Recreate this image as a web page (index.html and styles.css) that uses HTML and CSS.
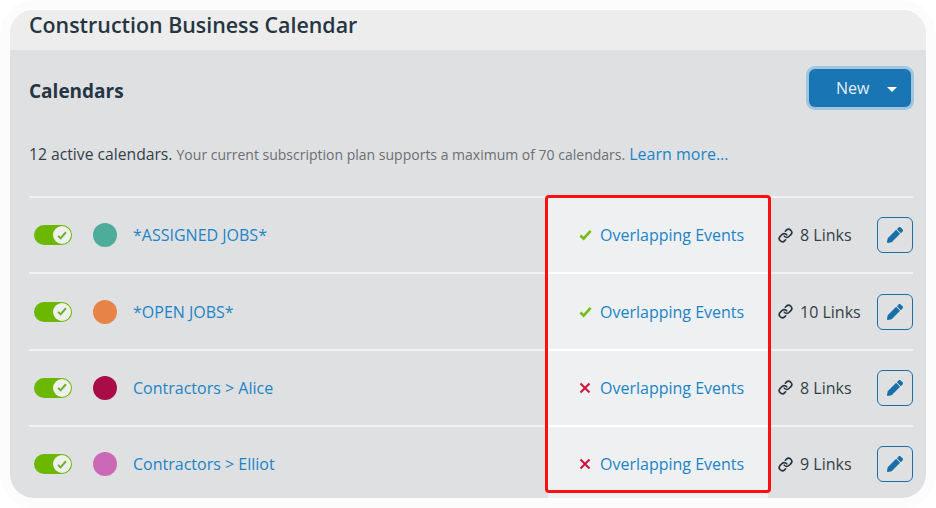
FILE: index.html
```html
<!DOCTYPE html>
<html lang="en">
<head>
<meta charset="utf-8">
<title>Construction Business Calendar</title>
<link rel="stylesheet" href="styles.css">
</head>
<body>
<svg class="defs" aria-hidden="true">
  <symbol id="link" viewBox="0 0 24 24"><path d="M10 13a5 5 0 0 0 7.54.54l3-3a5 5 0 0 0-7.07-7.07l-1.72 1.71"/><path d="M14 11a5 5 0 0 0-7.54-.54l-3 3a5 5 0 0 0 7.07 7.07l1.71-1.71"/></symbol>
  <symbol id="pencil" viewBox="0 0 512 512"><path d="M497.9 142.1l-46.1 46.1c-4.7 4.7-12.3 4.7-17 0l-111-111c-4.7-4.7-4.7-12.3 0-17l46.1-46.1c18.7-18.7 49.1-18.7 67.9 0l60.1 60.1c18.8 18.7 18.8 49.1 0 67.9zM284.2 99.8L21.6 362.4.4 483.9c-2.9 16.4 11.4 30.6 27.8 27.8l121.5-21.3 262.6-262.6c4.7-4.7 4.7-12.3 0-17l-111-111c-4.8-4.7-12.4-4.7-17.1 0z"/></symbol>
  <symbol id="tick" viewBox="0 0 14 12"><path d="M1.5 6.5 5 10l7.5-8.5" fill="none" stroke="currentColor" stroke-width="2.8"/></symbol>
  <symbol id="cross" viewBox="0 0 12 12"><path d="M1.5 1.5l9 9M10.5 1.5l-9 9" fill="none" stroke="currentColor" stroke-width="2.1"/></symbol>
</svg>
<main class="card">
  <header class="top"><h1 class="title">Construction Business Calendar</h1></header>
  <section class="body">
    <div class="head">
      <h2 class="heading">Calendars</h2>
      <button class="new" type="button">New<span class="caret"></span></button>
    </div>
    <p class="summary">12 active calendars. <small class="note">Your current subscription plan supports a maximum of 70 calendars.</small> <a class="link more" href="#">Learn more...</a></p>
    <div class="list">
      <div class="row">
        <span class="toggle"><span class="knob"><svg class="knob-tick"><use href="#tick"/></svg></span></span>
        <span class="dot teal"></span>
        <a class="link name" href="#">*ASSIGNED JOBS*</a>
        <span class="status"><svg class="mark ok"><use href="#tick"/></svg><a class="link" href="#">Overlapping Events</a></span>
        <span class="links"><svg class="chain"><use href="#link"/></svg>8 Links</span>
        <button class="edit" type="button" aria-label="Edit"><svg class="pencil"><use href="#pencil"/></svg></button>
      </div>
      <div class="row">
        <span class="toggle"><span class="knob"><svg class="knob-tick"><use href="#tick"/></svg></span></span>
        <span class="dot orange"></span>
        <a class="link name" href="#">*OPEN JOBS*</a>
        <span class="status"><svg class="mark ok"><use href="#tick"/></svg><a class="link" href="#">Overlapping Events</a></span>
        <span class="links"><svg class="chain"><use href="#link"/></svg>10 Links</span>
        <button class="edit" type="button" aria-label="Edit"><svg class="pencil"><use href="#pencil"/></svg></button>
      </div>
      <div class="row">
        <span class="toggle"><span class="knob"><svg class="knob-tick"><use href="#tick"/></svg></span></span>
        <span class="dot crimson"></span>
        <a class="link name" href="#">Contractors &gt; Alice</a>
        <span class="status"><svg class="mark bad"><use href="#cross"/></svg><a class="link" href="#">Overlapping Events</a></span>
        <span class="links"><svg class="chain"><use href="#link"/></svg>8 Links</span>
        <button class="edit" type="button" aria-label="Edit"><svg class="pencil"><use href="#pencil"/></svg></button>
      </div>
      <div class="row">
        <span class="toggle"><span class="knob"><svg class="knob-tick"><use href="#tick"/></svg></span></span>
        <span class="dot pink"></span>
        <a class="link name" href="#">Contractors &gt; Elliot</a>
        <span class="status"><svg class="mark bad"><use href="#cross"/></svg><a class="link" href="#">Overlapping Events</a></span>
        <span class="links"><svg class="chain"><use href="#link"/></svg>9 Links</span>
        <button class="edit" type="button" aria-label="Edit"><svg class="pencil"><use href="#pencil"/></svg></button>
      </div>
      <div class="callout"></div>
    </div>
  </section>
</main>
</body>
</html>
```

FILE: styles.css
```css
* { box-sizing: border-box; }
html, body { height: 100%; }
body {
  margin: 0;
  padding: 10px;
  background: #fff;
  font-family: "Open Sans", "Noto Sans", sans-serif;
  color: #333f48;
  overflow: hidden;
}
.defs { display: none; }
.card {
  height: 488px;
  border-radius: 24px;
  overflow: hidden;
  background: #dfe0e2;
  box-shadow: 0 0 0 10px #fcfcfc;
}
.top {
  height: 40px;
  background: #ededed;
  padding-left: 19px;
}
.title {
  margin: 0;
  font-size: 21.4px;
  line-height: 30px;
  font-weight: 550;
  color: #253642;
}
.body { padding: 0 13px 0 19px; }
.head {
  display: flex;
  justify-content: space-between;
  align-items: center;
  height: 38px;
  margin-top: 19px;
  padding-right: 2px;
}
.heading {
  margin: 0;
  padding-top: 6px;
  font-size: 19px;
  line-height: 24px;
  font-weight: 700;
  color: #253642;
}
.new {
  display: flex;
  align-items: center;
  width: 102px;
  height: 38px;
  padding: 0 0 0 27px;
  border: 0;
  border-radius: 6px;
  background: #1a75b4;
  box-shadow: 0 0 0 3px #9fc6de;
  color: #e4eff6;
  font: 400 16px/22px "Open Sans", sans-serif;
}
.caret {
  margin-left: 18px;
  margin-top: 2px;
  border-top: 5px solid #fff;
  border-left: 5px solid transparent;
  border-right: 5px solid transparent;
}
.summary {
  margin: 36px 0 0;
  height: 22px;
  font-size: 15.7px;
  line-height: 22px;
  color: #333f48;
}
.note { font-size: 14px; color: #6b6f73; }
.link { color: #1b84c6; text-decoration: none; }
.more { font-size: 16px; }
.list {
  position: relative;
  margin-top: 31px;
}
.row {
  display: flex;
  align-items: center;
  height: 76.4px;
  border-top: 2px solid #f0f1f2;
  padding-left: 5px;
  font-size: 16px;
}
.toggle {
  display: flex;
  align-items: center;
  justify-content: flex-end;
  flex: none;
  width: 38px;
  height: 20px;
  padding-right: 1px;
  border-radius: 10px;
  background: #6cb700;
}
.knob {
  display: flex;
  align-items: center;
  justify-content: center;
  width: 18px;
  height: 18px;
  border-radius: 50%;
  background: #eef0ec;
}
.knob-tick { width: 10px; height: 9px; color: #6fae2c; }
.dot {
  flex: none;
  width: 24px;
  height: 24px;
  margin-left: 21px;
  border-radius: 50%;
}
.teal { background: #4eac9b; }
.orange { background: #e88348; }
.crimson { background: #a80d47; }
.pink { background: #cc69b6; }
.name { margin-left: 16px; flex: 1; }
.status {
  display: flex;
  align-items: center;
  flex: none;
  align-self: stretch;
  width: 220px;
  margin-top: -2px;
  padding-left: 31px;
  background: #eff0f2;
  border-top: 2px solid #fff;
}
.row:last-of-type .status {
  align-self: flex-start;
  height: 68px;
  padding-top: 8px;
}
.mark { width: 13px; height: 12px; margin-right: 8px; flex: none; }
.ok { color: #76bd12; }
.bad { color: #d0163e; width: 12px; margin-right: 9px; }
.links {
  display: flex;
  align-items: center;
  flex: none;
  width: 99px;
  margin-left: 10px;
  color: #333f48;
}
.chain {
  width: 15px;
  height: 15px;
  margin-right: 7px;
  fill: none;
  stroke: #27333c;
  stroke-width: 2.6;
  stroke-linecap: round;
}
.edit {
  display: flex;
  align-items: center;
  justify-content: center;
  flex: none;
  width: 36px;
  height: 36px;
  padding: 0;
  border: 1px solid #1a6fa8;
  border-radius: 6px;
  background: transparent;
}
.pencil { width: 16px; height: 16px; fill: #1a6fa8; }
.callout {
  position: absolute;
  left: 516px;
  top: -1px;
  width: 226px;
  height: 298px;
  border: 3px solid #ff1010;
  border-radius: 4px;
  pointer-events: none;
}
```
